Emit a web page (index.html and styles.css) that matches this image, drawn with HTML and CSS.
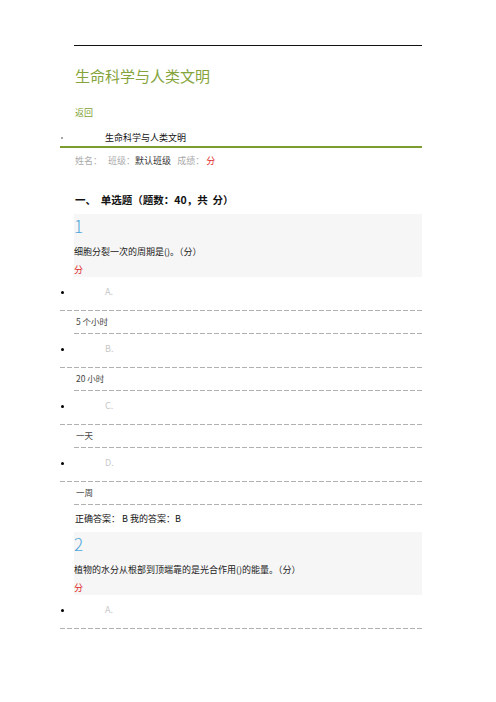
FILE: index.html
```html
<!DOCTYPE html>
<html lang="zh">
<head>
<meta charset="utf-8">
<title>生命科学与人类文明</title>
<link rel="stylesheet" href="styles.css">
</head>
<body>
<div class="page">
  <div class="topline"></div>
  <h1 class="title">生命科学与人类文明</h1>
  <div class="back">返回</div>
  <div class="course"><span class="cdot"></span><span class="ctext">生命科学与人类文明</span></div>
  <div class="info">姓名：&nbsp;&nbsp;&nbsp;班级：<span class="dark">默认班级</span>&nbsp;&nbsp;&nbsp;成绩：&nbsp;<span class="red">分</span></div>
  <div class="section">一、&nbsp;&nbsp;单选题（题数：40，共&nbsp;&nbsp;分）</div>

  <div class="qbox">
    <div class="qnum">1</div>
    <div class="qtext">细胞分裂一次的周期是()。（分）</div>
    <div class="qscore">分</div>
  </div>
  <div class="opt"><span class="dot"></span><span class="letter">A.</span></div>
  <div class="dash"></div>
  <div class="ans">5 个小时</div>
  <div class="dash short"></div>
  <div class="opt"><span class="dot"></span><span class="letter">B.</span></div>
  <div class="dash"></div>
  <div class="ans">20 小时</div>
  <div class="dash short"></div>
  <div class="opt"><span class="dot"></span><span class="letter">C.</span></div>
  <div class="dash"></div>
  <div class="ans">一天</div>
  <div class="dash short"></div>
  <div class="opt"><span class="dot"></span><span class="letter">D.</span></div>
  <div class="dash"></div>
  <div class="ans">一周</div>
  <div class="dash short"></div>
  <div class="result">正确答案：&nbsp;B 我的答案：B</div>

  <div class="qbox">
    <div class="qnum">2</div>
    <div class="qtext">植物的水分从根部到顶端靠的是光合作用()的能量。（分）</div>
    <div class="qscore">分</div>
  </div>
  <div class="opt"><span class="dot"></span><span class="letter">A.</span></div>
  <div class="dash"></div>
</div>
</body>
</html>
```

FILE: styles.css
```css
html, body {
  margin: 0;
  padding: 0;
  background: #fff;
}
body {
  font-family: "Noto Sans CJK SC", "Noto Sans", sans-serif;
  color: #222;
}
.page {
  width: 362px;
  margin-left: 60px;
  padding-top: 45px;
}
.topline {
  margin-left: 14px;
  height: 1px;
  background: #111;
}
.title {
  margin: 20px 0 0 15px;
  font-size: 15px;
  line-height: 20px;
  font-weight: normal;
  color: #86a43c;
}
.back {
  margin: 20px 0 0 15px;
  font-size: 9px;
  line-height: 14px;
  color: #7f9f35;
}
.course {
  margin-top: 11px;
  display: flex;
  align-items: center;
  height: 14px;
  padding-bottom: 1px;
  border-bottom: 2px solid #7d9c2f;
}
.cdot {
  width: 2px;
  height: 2px;
  margin-left: 1px;
  border-radius: 50%;
  background: #888;
}
.ctext {
  margin-left: 42px;
  font-size: 9px;
  line-height: 14px;
  color: #111;
}
.info {
  margin: 6px 0 0 15px;
  font-size: 9px;
  line-height: 14px;
  color: #aaa;
}
.dark { color: #333; }
.red { color: #e02a2a; }
.section {
  margin: 24px 0 0 15px;
  font-size: 10.5px;
  line-height: 16px;
  font-weight: bold;
  color: #111;
}
.qbox {
  margin: 6px 0 0 14px;
  background: #f6f6f6;
  height: 63px;
  padding-top: 2px;
  box-sizing: border-box;
}
.qnum {
  font-size: 17px;
  line-height: 20px;
  font-weight: 300;
  color: #4ea6da;
}
.qtext {
  margin-top: 9px;
  font-size: 9px;
  line-height: 14px;
  color: #222;
}
.qscore {
  margin-top: 4px;
  font-size: 9px;
  line-height: 14px;
  color: #e02a2a;
}
.opt {
  margin-top: 8px;
  height: 14px;
  display: flex;
  align-items: center;
  margin-bottom: 11px;
}
.dot {
  width: 3px;
  height: 3px;
  margin-left: 1px;
  border-radius: 50%;
  background: #000;
}
.letter {
  margin-left: 41px;
  font-size: 9px;
  line-height: 14px;
  color: #c8c8c8;
}
.dash {
  height: 1px;
  background: repeating-linear-gradient(90deg, #b0b0b0 0 5px, transparent 5px 7px);
}
.dash.short {
  margin-left: 14px;
}
.ans {
  margin: 3px 0 5px 16px;
  font-size: 8.5px;
  line-height: 14px;
  color: #444;
}
.result {
  margin: 7px 0 0 15px;
  font-size: 9px;
  line-height: 14px;
  color: #111;
}
```
